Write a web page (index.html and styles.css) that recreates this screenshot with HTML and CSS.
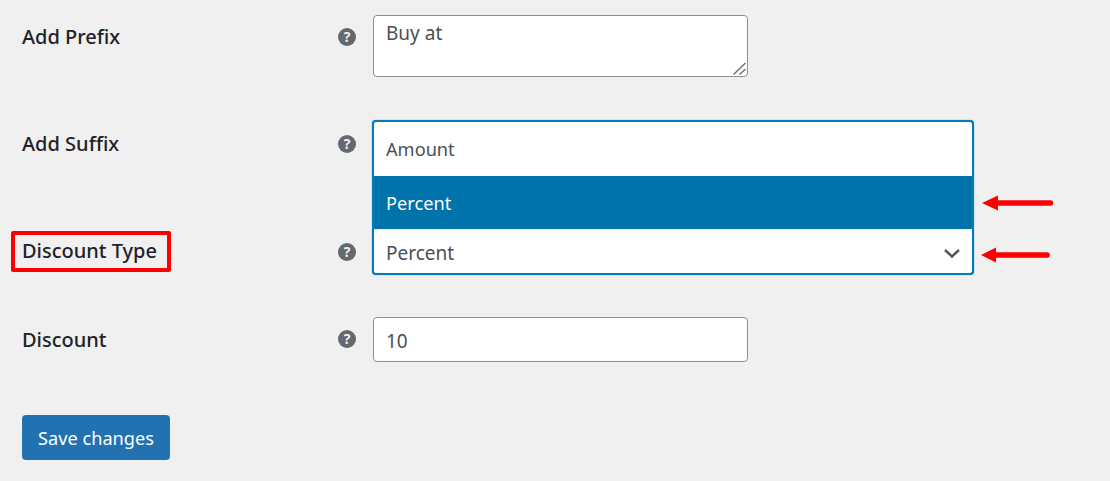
FILE: index.html
```html
<!DOCTYPE html>
<html lang="en">
<head>
<meta charset="utf-8">
<title>Discount settings</title>
<link rel="stylesheet" href="styles.css">
</head>
<body>
<form class="form">
  <div class="row row-prefix">
    <label class="label">Add Prefix</label>
    <span class="help">?</span>
    <div class="textarea-wrap">
      <textarea class="textarea">Buy at</textarea>
      <svg class="grip" width="14" height="14" viewBox="0 0 14 14"><path d="M0.500 12.500L12.500 1M6.500 12.500L12.500 7" fill="none" stroke="#6e6e6e" stroke-width="1.400"/></svg>
    </div>
  </div>
  <div class="row row-suffix">
    <label class="label">Add Suffix</label>
    <span class="help">?</span>
    <input class="input" type="text">
  </div>
  <div class="row row-type">
    <label class="label label-marked">Discount Type</label>
    <span class="help">?</span>
    <div class="select">
      <ul class="options">
        <li class="option">Amount</li>
        <li class="option option-active">Percent</li>
      </ul>
      <span class="select-value">Percent</span>
      <svg class="chevron" width="18" height="12" viewBox="0 0 18 12"><path d="M2 3l7 6.500L16 3" fill="none" stroke="#50575e" stroke-width="2.400"/></svg>
      <svg class="arrow arrow-option" width="74" height="18" viewBox="0 0 74 18"><path d="M1 9L17 1.500V6.200H69.500a2.800 2.800 0 0 1 0 5.600H17V16.500Z" fill="#f00"/></svg>
      <svg class="arrow arrow-select" width="72" height="18" viewBox="0 0 72 18"><path d="M1 9L16 1.500V6.200H67a2.800 2.800 0 0 1 0 5.600H16V16.500Z" fill="#f00"/></svg>
    </div>
  </div>
  <div class="row row-discount">
    <label class="label">Discount</label>
    <span class="help">?</span>
    <input class="input" type="text" value="10">
  </div>
  <button class="save" type="button">Save changes</button>
</form>
</body>
</html>
```
FILE: styles.css
```css
*,
*::before {
  box-sizing: border-box;
}

html,
body {
  margin: 0;
  height: 100%;
  overflow: hidden;
  background: #f0f0f1;
}

body {
  font-family: "Noto Sans", "Open Sans", sans-serif;
  font-size: 19px;
  color: #1d2327;
}

.form {
  display: flex;
  flex-direction: column;
  align-items: flex-start;
  padding: 15px 0 0 22px;
}

.row {
  display: grid;
  grid-template-columns: 316px 35px auto;
  align-items: start;
}

.row-prefix {
  height: 62px;
  margin-bottom: 45px;
}

.row-suffix {
  height: 45px;
  margin-bottom: 63px;
}

.row-type {
  height: 45px;
  margin-bottom: 42px;
}

.row-discount {
  height: 45px;
  margin-bottom: 53px;
}

.row-discount .label {
  padding-top: 1px;
}

.label {
  position: relative;
  grid-column: 1;
  font-size: 20px;
  line-height: 43px;
  font-weight: 500;
  white-space: nowrap;
}

.label-marked {
  line-height: 41px;
}

.label-marked::before {
  content: "";
  position: absolute;
  left: -11px;
  top: 1px;
  width: 160px;
  height: 41px;
  border: 4px solid #f00;
  border-radius: 2px;
}

.help {
  display: flex;
  align-items: center;
  justify-content: center;
  width: 18px;
  height: 18px;
  margin-top: 13px;
  border-radius: 50%;
  background: #646970;
  color: #f0f0f1;
  font-size: 14px;
  font-weight: 700;
  line-height: 1;
}

.textarea-wrap {
  position: relative;
  width: 375px;
  height: 62px;
}

.grip {
  position: absolute;
  right: 1px;
  bottom: 1px;
}

.textarea,
.input {
  display: block;
  width: 375px;
  margin: 0;
  border: 1px solid #8c8f94;
  border-radius: 4px;
  background: #fff;
  color: #4a5056;
  font: inherit;
  outline: 0;
}

.textarea {
  height: 62px;
  padding: 3px 12px;
  line-height: 28px;
  resize: none;
}

.input {
  height: 45px;
  padding: 2px 12px 0;
}

.select {
  position: relative;
  display: flex;
  align-items: center;
  justify-content: space-between;
  width: 602px;
  height: 46px;
  margin: -1px 0 0 -1px;
  padding: 4px 12px 0 12px;
  border: 2px solid #007cba;
  border-top: 0;
  border-radius: 0 0 4px 4px;
  background: #fff;
  color: #4a5056;
  box-shadow: 0 0 1px #007cba;
}

.options {
  position: absolute;
  left: -2px;
  right: -2px;
  bottom: 100%;
  margin: 0;
  padding: 0;
  list-style: none;
  border: 2px solid #007cba;
  border-bottom: 0;
  border-radius: 4px 4px 0 0;
  background: #fff;
  box-shadow: 0 0 1px #007cba;
  font-size: 18.200px;
}

.option {
  height: 54px;
  padding: 0 12px;
  line-height: 54px;
}

.option-active {
  height: 53px;
  background: #0073aa;
  color: #fff;
}

.chevron {
  margin-right: -1px;
}

.arrow {
  position: absolute;
}

.arrow-option {
  left: 607px;
  top: -35px;
}

.arrow-select {
  left: 606px;
  top: 17px;
}

.save {
  width: 148px;
  height: 45px;
  padding: 0;
  border: 0;
  border-radius: 4px;
  background: #2271b1;
  color: #fff;
  font: inherit;
  font-size: 18.200px;
}
```
